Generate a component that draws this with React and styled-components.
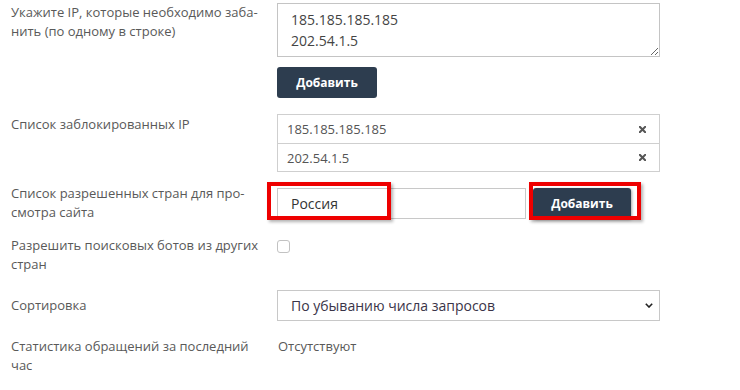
import React from 'react';
import styled, { createGlobalStyle } from 'styled-components';

const GlobalStyle = createGlobalStyle`
  body {
    margin: 0;
    background: #fff;
    font-family: 'Open Sans', 'Liberation Sans', sans-serif;
  }
`;

const Form = styled.div`
  width: 740px;
  padding: 3px 0 0 11px;
  box-sizing: border-box;
`;

const Row = styled.div`
  display: grid;
  grid-template-columns: 255px 383px;
  column-gap: 11px;
  align-items: ${p => (p.$center ? 'center' : 'start')};
  margin-top: ${p => p.$mt || 0}px;
`;

const Label = styled.div`
  font-size: 13px;
  line-height: 19px;
  color: #595959;
  padding-top: ${p => p.$pt || 0}px;
`;

const Control = styled.div`
  position: relative;
  display: flex;
  flex-direction: column;
  align-items: flex-start;
`;

const TextArea = styled.textarea`
  width: 383px;
  height: 54px;
  box-sizing: border-box;
  border: 1px solid #c4c4c4;
  padding: 5px 13px;
  font-family: inherit;
  font-size: 14px;
  line-height: 21px;
  color: #444;
  resize: vertical;
  outline: none;
  display: block;
`;

const DarkButton = styled.button`
  width: ${p => p.$w || 100}px;
  height: 31px;
  margin-top: ${p => p.$mt || 0}px;
  background: #2d3d4f;
  color: #fff;
  border: none;
  border-radius: 3px;
  font-family: inherit;
  font-weight: 700;
  font-size: 12px;
  cursor: pointer;
  box-shadow: ${p => (p.$shadow ? '1px 1px 3px rgba(0,0,0,0.35)' : 'none')};
`;

const List = styled.ul`
  list-style: none;
  margin: 0;
  padding: 0;
  width: 383px;
  border: 1px solid #cfcfcf;
  box-sizing: border-box;
`;

const Item = styled.li`
  height: 28px;
  display: flex;
  align-items: center;
  justify-content: space-between;
  padding: 0 13px 0 9px;
  font-size: 13px;
  color: #555;
  & + & {
    border-top: 1px solid #cfcfcf;
    height: 27px;
  }
`;

const Remove = styled.span`
  display: flex;
  width: 7px;
  height: 7px;
`;

const InlineGroup = styled.div`
  display: flex;
  align-items: center;
  gap: 7px;
`;

const TextInput = styled.input`
  width: 249px;
  height: 31px;
  box-sizing: border-box;
  border: 1px solid #c8c8c8;
  padding: 0 13px;
  font-family: inherit;
  font-size: 14px;
  color: #333;
  outline: none;
`;

const Highlight = styled.div`
  position: absolute;
  top: -6px;
  left: ${p => p.$left}px;
  width: ${p => p.$w}px;
  height: 38px;
  box-sizing: border-box;
  border: 4px solid #ee0000;
  box-shadow: 2px 2px 3px rgba(0, 0, 0, 0.3);
  pointer-events: none;
`;

const Checkbox = styled.span`
  display: block;
  width: 13px;
  height: 13px;
  margin-top: 4px;
  border: 1px solid #c2c2c2;
  border-radius: 3px;
  box-sizing: border-box;
`;

const SelectWrap = styled.div`
  position: relative;
  width: 383px;
`;

const Select = styled.select`
  width: 383px;
  height: 31px;
  appearance: none;
  border: 1px solid #c8c8c8;
  border-radius: 0;
  background: #fff;
  padding: 0 30px 0 13px;
  font-family: inherit;
  font-size: 14px;
  color: #3a3448;
  outline: none;
`;

const Chevron = styled.svg`
  position: absolute;
  right: 7px;
  top: 13px;
  pointer-events: none;
`;

const Value = styled.div`
  font-size: 13px;
  line-height: 19px;
  color: #595959;
  padding-left: 1px;
`;

const CrossIcon = () => (
  <svg width="7" height="7" viewBox="0 0 7 7">
    <path d="M0.8 0.8 L6.2 6.2 M6.2 0.8 L0.8 6.2" stroke="#555" strokeWidth="2" strokeLinecap="square" />
  </svg>
);

const blocked = ['185.185.185.185', '202.54.1.5'];

const App = () => (
  <>
    <GlobalStyle />
    <Form>
      <Row>
        <Label>Укажите IP, которые необходимо заба&shy;нить (по одному в строке)</Label>
        <Control>
          <TextArea defaultValue={'185.185.185.185\n202.54.1.5'} />
          <DarkButton $mt={10}>Добавить</DarkButton>
        </Control>
      </Row>

      <Row $mt={16}>
        <Label $pt={1}>Список заблокированных IP</Label>
        <List>
          {blocked.map(ip => (
            <Item key={ip}>
              {ip}
              <Remove>
                <CrossIcon />
              </Remove>
            </Item>
          ))}
        </List>
      </Row>

      <Row $mt={12} $center>
        <Label>Список разрешенных стран для про&shy;смотра сайта</Label>
        <Control>
          <InlineGroup>
            <TextInput defaultValue="Россия" />
            <DarkButton $w={98} $shadow>Добавить</DarkButton>
          </InlineGroup>
          <Highlight $left={-10} $w={124} />
          <Highlight $left={252} $w={112} />
        </Control>
      </Row>

      <Row $mt={14}>
        <Label>Разрешить поисковых ботов из других стран</Label>
        <Checkbox />
      </Row>

      <Row $mt={16} $center>
        <Label>Сортировка</Label>
        <SelectWrap>
          <Select defaultValue="desc">
            <option value="desc">По убыванию числа запросов</option>
            <option value="asc">По возрастанию числа запросов</option>
          </Select>
          <Chevron width="8" height="5" viewBox="0 0 8 5">
            <path d="M0.8 0.8 L4 4 L7.2 0.8" fill="none" stroke="#222" strokeWidth="1.6" />
          </Chevron>
        </SelectWrap>
      </Row>

      <Row $mt={16}>
        <Label>Статистика обращений за последний час</Label>
        <Value>Отсутствуют</Value>
      </Row>
    </Form>
  </>
);

export default App;
